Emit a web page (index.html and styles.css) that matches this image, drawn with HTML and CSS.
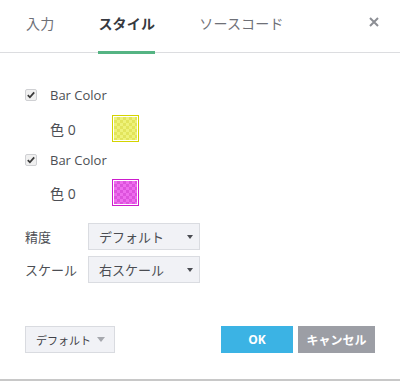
FILE: index.html
```html
<!DOCTYPE html>
<html lang="ja">
<head>
<meta charset="utf-8">
<link rel="stylesheet" href="styles.css">
</head>
<body>
<div class="dialog">
  <div class="tabs">
    <div class="tab">入力</div>
    <div class="tab active">スタイル</div>
    <div class="tab">ソースコード</div>
    <div class="close">
      <svg width="10" height="10" viewBox="0 0 10 10"><path d="M1 1L9 9M9 1L1 9" stroke="#8c8e94" stroke-width="2"/></svg>
    </div>
  </div>
  <div class="content">
    <div class="check-row first">
      <span class="checkbox"><svg width="12" height="12" viewBox="0 0 12 12"><path d="M2.8 6.2L4.9 8.3L9.2 3.4" fill="none" stroke="#3a3a3a" stroke-width="1.8"/></svg></span>
      <span class="check-label">Bar Color</span>
    </div>
    <div class="color-row">
      <span class="color-label">色 0</span>
      <span class="swatch yellow"><span class="checker"></span></span>
    </div>
    <div class="check-row second">
      <span class="checkbox"><svg width="12" height="12" viewBox="0 0 12 12"><path d="M2.8 6.2L4.9 8.3L9.2 3.4" fill="none" stroke="#3a3a3a" stroke-width="1.8"/></svg></span>
      <span class="check-label">Bar Color</span>
    </div>
    <div class="color-row">
      <span class="color-label">色 0</span>
      <span class="swatch magenta"><span class="checker"></span></span>
    </div>
    <div class="field-row first-field">
      <span class="field-label">精度</span>
      <span class="select"><span>デフォルト</span><span class="arrow"></span></span>
    </div>
    <div class="field-row">
      <span class="field-label">スケール</span>
      <span class="select"><span>右スケール</span><span class="arrow"></span></span>
    </div>
  </div>
  <div class="footer">
    <span class="drop-btn"><span>デフォルト</span><span class="arrow light"></span></span>
    <span class="spacer"></span>
    <span class="btn ok">OK</span>
    <span class="btn cancel">キャンセル</span>
  </div>
  <div class="bottom-line"></div>
</div>
</body>
</html>
```
FILE: styles.css
```css
html, body {
  margin: 0;
  padding: 0;
  background: #fff;
}
body {
  font-family: "Open Sans", "Noto Sans CJK JP", sans-serif;
  color: #4a4c52;
}
.dialog {
  width: 400px;
  height: 381px;
  display: flex;
  flex-direction: column;
}
.tabs {
  height: 52px;
  border-bottom: 1px solid #dcdde0;
  display: flex;
  align-items: stretch;
  padding-left: 26px;
  gap: 44px;
  box-sizing: content-box;
}
.tab {
  font-family: "Noto Sans CJK JP", sans-serif;
  font-size: 14px;
  color: #6e7077;
  display: flex;
  align-items: center;
  padding-bottom: 5px;
  box-sizing: border-box;
  border-bottom: 3px solid transparent;
  margin-bottom: -2px;
  letter-spacing: 0.2px;
}
.tab.active {
  color: #363940;
  font-weight: 700;
  border-bottom-color: #55b483;
}
.close {
  margin-left: auto;
  margin-right: 21px;
  display: flex;
  align-items: center;
  padding-bottom: 9px;
}
.content {
  padding-left: 25px;
  display: flex;
  flex-direction: column;
}
.check-row {
  height: 22px;
  display: flex;
  align-items: center;
}
.check-row.first { margin-top: 31px; }
.check-row.second { margin-top: 7px; }
.checkbox {
  width: 12px;
  height: 12px;
  border: 1px solid #cfd0d3;
  border-radius: 2px;
  background: #f0f0f0;
  box-sizing: border-box;
  display: flex;
  align-items: center;
  justify-content: center;
}
.checkbox svg { flex: none; }
.check-label {
  margin-left: 13px;
  font-size: 13px;
  color: #4c4e54;
}
.color-row {
  height: 27px;
  margin-top: 9px;
  display: flex;
  align-items: center;
  padding-left: 25px;
}
.check-row.second + .color-row { margin-top: 8px; }
.color-label {
  width: 62px;
  font-size: 14px;
  font-family: "Open Sans", "Noto Sans CJK JP", sans-serif;
  color: #4c4e54;
}
.swatch {
  width: 27px;
  height: 27px;
  box-sizing: border-box;
  border: 1px solid;
  padding: 1px;
  background: #fff;
  display: flex;
}
.checker {
  flex: 1;
  background-size: 6px 6px;
}
.swatch.yellow { border-color: #d4d400; }
.swatch.yellow .checker {
  background-color: #eef27a;
  background-image: conic-gradient(#e2e45c 25%, transparent 0 50%, #e2e45c 0 75%, transparent 0);
}
.swatch.magenta { border-color: #cc1ccc; }
.swatch.magenta .checker {
  background-color: #ee6cee;
  background-image: conic-gradient(#dd52dd 25%, transparent 0 50%, #dd52dd 0 75%, transparent 0);
}
.field-row {
  display: flex;
  align-items: center;
  margin-top: 6px;
  height: 27px;
}
.field-row.first-field { margin-top: 17px; }
.field-label {
  width: 63px;
  font-family: "Noto Sans CJK JP", sans-serif;
  font-size: 13px;
  color: #4c4e54;
}
.select {
  width: 112px;
  height: 27px;
  box-sizing: border-box;
  border: 1px solid #dadce1;
  background: #f1f2f6;
  display: flex;
  align-items: center;
  padding-left: 10px;
  padding-right: 6px;
  font-family: "Noto Sans CJK JP", sans-serif;
  font-size: 13px;
  color: #4a4c52;
}
.arrow {
  margin-left: auto;
  width: 0;
  height: 0;
  border-left: 3.5px solid transparent;
  border-right: 3.5px solid transparent;
  border-top: 4px solid #4a4c52;
}
.arrow.light {
  border-left-width: 4.5px;
  border-right-width: 4.5px;
  border-top: 5px solid #a6a8ae;
}
.footer {
  margin-top: 43px;
  display: flex;
  align-items: center;
  padding-left: 25px;
  padding-right: 25px;
  height: 27px;
}
.drop-btn {
  width: 90px;
  height: 27px;
  box-sizing: border-box;
  border: 1px solid #d9dbe0;
  background: #f1f2f6;
  display: flex;
  align-items: center;
  padding-left: 10px;
  padding-right: 9px;
  font-family: "Noto Sans CJK JP", sans-serif;
  font-size: 11px;
  color: #3f4147;
}
.spacer { flex: 1; }
.btn {
  height: 27px;
  display: flex;
  align-items: center;
  justify-content: center;
  color: #fff;
  font-weight: 700;
  font-size: 12px;
  font-family: "Open Sans", "Noto Sans CJK JP", sans-serif;
}
.btn.ok {
  width: 72px;
  background: #3bb3e4;
}
.btn.cancel {
  width: 77px;
  margin-left: 5px;
  background: #9c9ea5;
}
.bottom-line {
  margin-top: auto;
  height: 2px;
  background: #c8c8c8;
}
```
